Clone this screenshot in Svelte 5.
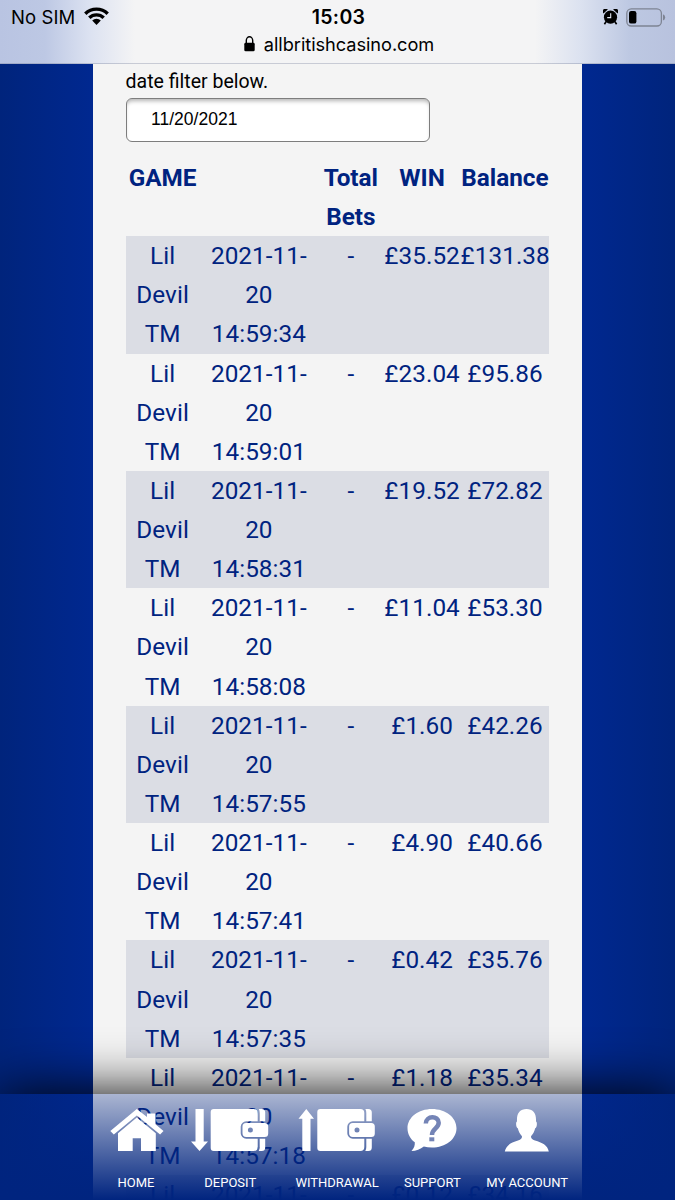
<script>
  let date = "11/20/2021";

  const games = [
    { time: "14:59:34", win: "£35.52", balance: "£131.38" },
    { time: "14:59:01", win: "£23.04", balance: "£95.86" },
    { time: "14:58:31", win: "£19.52", balance: "£72.82" },
    { time: "14:58:08", win: "£11.04", balance: "£53.30" },
    { time: "14:57:55", win: "£1.60", balance: "£42.26" },
    { time: "14:57:41", win: "£4.90", balance: "£40.66" },
    { time: "14:57:35", win: "£0.42", balance: "£35.76" },
    { time: "14:57:18", win: "£1.18", balance: "£35.34" },
    { time: "14:57:10", win: "£0.12", balance: "£34.16" }
  ];
</script>

<div class="screen">
  <header class="browser">
    <div class="status">
      <div class="carrier">
        <span>No SIM</span>
        <svg width="25" height="18" viewBox="0 0 25 18">
          <g fill="none" stroke="#000" stroke-width="3.4">
            <path d="M1.3 6.7a16 16 0 0 1 22.4 0" />
            <path d="M5.3 10.8a10.3 10.3 0 0 1 14.4 0" />
          </g>
          <path d="M8.2 13.6a6.2 6.2 0 0 1 8.6 0L12.5 18z" />
        </svg>
      </div>
      <span class="clock">15:03</span>
      <div class="indicators">
        <svg width="15" height="16" viewBox="0 0 15 16">
          <circle cx="7.5" cy="8.2" r="6.6" />
          <path d="M.4 4.4A2.8 2.8 0 0 1 4.8.6zM14.6 4.4A2.8 2.8 0 0 0 10.2.6z" />
          <path d="M3.2 12.5l-1.8 2.8M11.8 12.5l1.8 2.8" stroke="#000" stroke-width="1.6" />
          <path d="M7.7 4.3v4.3H4.2" fill="none" stroke="#dfe4f0" stroke-width="1.1" />
        </svg>
        <svg width="40" height="19" viewBox="0 0 40 19">
          <rect x=".8" y=".8" width="34.6" height="17.2" rx="4.5" fill="none" stroke="#7e8493" stroke-width="1.3" />
          <rect x="3" y="3" width="7.4" height="12.6" rx="2.2" />
          <path d="M37 6.2q2.2 1 2.2 3.2T37 12.6z" fill="#7e8493" />
        </svg>
      </div>
    </div>
    <div class="address">
      <svg width="11" height="16" viewBox="0 0 11 16">
        <rect x=".3" y="6.8" width="10.4" height="8.5" rx="1.4" />
        <path d="M2.3 7.5V4.4a3.2 3.6 0 0 1 6.4 0v3.1" fill="none" stroke="#000" stroke-width="1.4" />
      </svg>
      <span>allbritishcasino.com</span>
    </div>
  </header>

  <main class="page">
    <p class="hint">date filter below.</p>
    <input class="date" type="text" bind:value={date} />

    <div class="history">
      <div class="row head">
        <span>GAME</span>
        <span></span>
        <span>Total<br />Bets</span>
        <span>WIN</span>
        <span>Balance</span>
      </div>
      {#each games as game}
        <div class="row">
          <span>Lil<br />Devil<br />TM</span>
          <span>2021-11-<br />20<br />{game.time}</span>
          <span>-</span>
          <span>{game.win}</span>
          <span>{game.balance}</span>
        </div>
      {/each}
    </div>
  </main>

  {#snippet wallet()}
    <path d="M3 0H43a4 4 0 0 1 4 4v8.3H35.5a5.5 5.5 0 0 0-5.5 5.5v6.4a5.5 5.5 0 0 0 5.5 5.5H47V38a4 4 0 0 1-4 4H3a3 3 0 0 1-3-3V3a3 3 0 0 1 3-3z" />
    <path d="M48.5 0H51a3.5 3.5 0 0 1 3.5 3.5V12.3H49V4q0-2.4-.9-4zM49 29.7h5.5v8.8A3.5 3.5 0 0 1 51 42h-3q1-1.6 1-4z" />
    <path fill-rule="evenodd" d="M35.5 14H54a3.5 3.5 0 0 1 3.5 3.5v7A3.5 3.5 0 0 1 54 28H35.500a3.7 3.7 0 0 1-3.7-3.7v-6.6a3.7 3.7 0 0 1 3.7-3.7zM39.7 18.5a2.5 2.5 0 1 0 0 5 2.5 2.5 0 1 0 0-5z" />
  {/snippet}

  <nav class="menu">
    <div class="menu-inner">
      <a class="item home" href="#home">
        <svg width="54" height="43" viewBox="0 0 54 43">
          <path d="M26.8 0L37 8V4.5h8.5v10.7L53.5 22l-3.4 3.4L26.8 6.5 3.8 25.4.3 22z" />
          <path d="M26.8 8.5L45.8 24.3V42H31v-12.7h-8.3V42H8V24.3z" />
        </svg>
        <span>HOME</span>
      </a>
      <a class="item deposit" href="#deposit">
        <svg width="78" height="43" viewBox="0 0 78 43">
          <path d="M4.5 0h8.2v32.5h4.3L8.5 42 0 32.5h4.5z" />
          <g transform="translate(19.7 0)">{@render wallet()}</g>
        </svg>
        <span>DEPOSIT</span>
      </a>
      <a class="item withdrawal" href="#withdrawal">
        <svg width="78" height="43" viewBox="0 0 78 43">
          <path d="M8.3 0L16 9.7h-3.5V42H4.3V9.7H.5z" />
          <g transform="translate(19.3 0)">{@render wallet()}</g>
        </svg>
        <span>WITHDRAWAL</span>
      </a>
      <a class="item support" href="#support">
        <svg width="50" height="43" viewBox="0 0 50 43">
          <path d="M25 0c13.5 0 24.5 8.3 24.5 19.2S38.5 38.5 25 38.5c-3 0-5.7-.4-8.2-1.1C13.5 40 9 41.8 4.5 42c2.7-2.8 3.5-5.7 3.3-8.7C3.2 29.7.5 24.8.5 19.2.5 8.3 11.5 0 25 0z" />
          <path class="mark" d="M18.8 14.5C19 6.2 31.7 6.5 31.7 13.7 31.7 19.3 25 19.5 25 26" />
          <path class="dot" d="M22.3 28.3h5v4h-5z" />
        </svg>
        <span>SUPPORT</span>
      </a>
      <a class="item account" href="#account">
        <svg width="46" height="43" viewBox="0 0 46 43">
          <path d="M22.5 0c6.5 0 10 4 9.5 12.5 1.5.5 1 6.3-.8 6.8-.8 3.3-2.2 6-4.2 8 0 2.2 1 3.2 4 4.2C38 33.5 43.5 36 44.8 42.5H.8C2 36 7.5 33.5 14 31.5c3-1 4-2 4-4.2-2-2-3.4-4.7-4.2-8-1.8-.5-2.3-6.3-.8-6.8C12.5 4 16 0 22.5 0z" />
        </svg>
        <span>MY ACCOUNT</span>
      </a>
    </div>
  </nav>
</div>

<style>
  :global(body) {
    margin: 0;
  }

  .screen {
    position: relative;
    box-sizing: border-box;
    width: 675px;
    height: 1200px;
    overflow: hidden;
    background: linear-gradient(90deg, #00247c 0, #002890 93px, #002890 582px, #00247c 675px);
    font-family: Roboto, sans-serif;
  }

  .browser {
    box-sizing: border-box;
    height: 64px;
    border-bottom: 1px solid rgba(100, 110, 140, 0.3);
    background: linear-gradient(90deg, #b9c4e2 0, #bdc8e4 45px, #dce2f1 90px, #f4f4f5 135px, #f4f4f5 535px, #dce2f0 580px, #bdc8e2 630px, #b8c2de 675px);
    font-family: Inter, sans-serif;
    color: #000;
  }

  .status {
    display: grid;
    grid-template-columns: 1fr auto 1fr;
    align-items: center;
    height: 34px;
    padding: 0 9px 0 11px;
  }

  .carrier {
    display: flex;
    align-items: center;
    gap: 9px;
    font-size: 18.5px;
    letter-spacing: 0.1px;
  }

  .carrier svg {
    margin-top: -3px;
  }

  .clock {
    font-size: 19.5px;
    font-weight: 600;
    letter-spacing: 0.3px;
  }

  .indicators {
    display: flex;
    align-items: center;
    justify-content: flex-end;
    gap: 8px;
  }

  .address {
    display: flex;
    align-items: center;
    justify-content: center;
    gap: 9px;
    height: 19px;
    padding-left: 3px;
    font-size: 18.2px;
    letter-spacing: -0.05px;
  }

  .page {
    box-sizing: border-box;
    width: 489px;
    height: 1136px;
    margin-left: 93px;
    padding: 4px 32px 0 32.6px;
    overflow: hidden;
    background: #f4f4f4;
  }

  .hint {
    margin: 0;
    font-size: 19.5px;
    line-height: 28px;
    color: #000;
  }

  .date {
    display: block;
    box-sizing: border-box;
    width: 304.5px;
    height: 44px;
    margin: 2px 0 0;
    padding: 0 24.5px 2px;
    border: 1.5px solid #7d7d7d;
    border-radius: 6px;
    background: #fff;
    box-shadow: inset 0 4px 4px -2px rgba(0, 0, 0, 0.3);
    font: 17.5px "Liberation Sans", sans-serif;
    color: #000;
  }

  .history {
    width: 423.8px;
    margin-top: 15.9px;
    font-size: 24.3px;
    line-height: 39.13px;
    letter-spacing: 0.05px;
    text-align: center;
    color: #002380;
  }

  .row {
    display: grid;
    grid-template-columns: 74px 118.5px 65.5px 77px 88.8px;
    white-space: nowrap;
  }

  .row:nth-child(even) {
    background: #dbdde4;
  }

  .head {
    font-weight: 700;
    letter-spacing: 0;
  }

  .menu {
    position: absolute;
    left: 0;
    right: 0;
    bottom: 0;
    height: 106px;
    background: linear-gradient(rgba(0, 36, 130, 0.3), #00247f);
    box-shadow: 0 0 56px #000;
  }

  .menu-inner {
    display: flex;
    box-sizing: border-box;
    width: 489px;
    height: 106px;
    margin-left: 93px;
    padding-top: 15px;
  }

  .item {
    display: flex;
    flex-direction: column;
    align-items: center;
    gap: 22px;
    font-size: 13px;
    line-height: 18px;
    text-decoration: none;
    white-space: nowrap;
    color: #fff;
  }

  .item svg {
    fill: #fff;
  }

  .home {
    width: 86px;
  }

  .home svg {
    margin-left: 3px;
  }

  .deposit {
    width: 103px;
  }

  .withdrawal {
    width: 111px;
  }

  .support {
    width: 80px;
  }

  .account {
    width: 110px;
  }

  .support .mark {
    fill: none;
    stroke: #7484b6;
    stroke-width: 4.5;
  }

  .support .dot {
    fill: #7484b6;
  }
</style>
